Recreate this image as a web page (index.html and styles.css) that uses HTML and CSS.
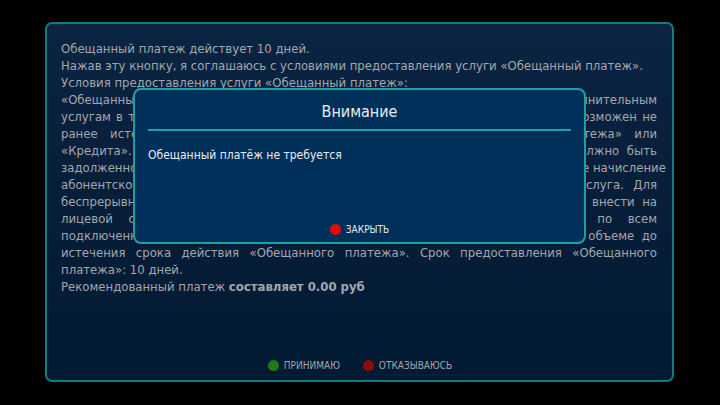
FILE: index.html
```html
<!DOCTYPE html>
<html lang="ru">
<head>
<meta charset="utf-8">
<title>Обещанный платеж</title>
<link rel="stylesheet" href="styles.css">
</head>
<body>
<div class="screen">
  <div class="panel">
    <div class="terms">
      <div class="line">Обещанный платеж действует 10 дней.</div>
      <div class="line">Нажав эту кнопку, я соглашаюсь с условиями предоставления услуги «Обещанный платеж».</div>
      <div class="line">Условия предоставления услуги «Обещанный платеж»:</div>
      <div class="line just">«Обещанный платеж» предоставляется для оплаты услуг по основным и дополнительным</div>
      <div class="line just">услугам в течение всего срока его действия. Повторный «Обещанный платеж» возможен не</div>
      <div class="line just">ранее истечения срока действия ранее подключенного «Обещанного платежа» или</div>
      <div class="line just">«Кредита». На момент подключения услуги на лицевом счете абонента не должно быть</div>
      <div class="line just">задолженности по оплате услуг более чем за один расчетный период. Ежемесячное начисление</div>
      <div class="line just">абонентской платы производится в полном объеме, пока предоставляется услуга. Для</div>
      <div class="line just">беспрерывного пользования услугами после окончания «Обещанного платежа» внести на</div>
      <div class="line just">лицевой счет денежные средства в сумме, достаточной для оплаты по всем</div>
      <div class="line just">подключенным пакетам и услугам, а также погасить «Обещанный платеж» в объеме до</div>
      <div class="line just">истечения срока действия «Обещанного платежа». Срок предоставления «Обещанного</div>
      <div class="line">платежа»: 10 дней.</div>
      <div class="line">Рекомендованный платеж <b>составляет 0.00 руб</b></div>
    </div>
    <div class="actions">
      <div class="action"><span class="dot green"></span>ПРИНИМАЮ</div>
      <div class="action"><span class="dot dark-red"></span>ОТКАЗЫВАЮСЬ</div>
    </div>
  </div>
  <div class="modal">
    <div class="modal-title">Внимание</div>
    <div class="modal-body">Обещанный платёж не требуется</div>
    <div class="modal-actions">
      <div class="action light"><span class="dot red"></span>ЗАКРЫТЬ</div>
    </div>
  </div>
</div>
</body>
</html>
```

FILE: styles.css
```css
html, body {
  margin: 0;
  padding: 0;
  background: #000;
}
body {
  width: 720px;
  height: 405px;
  overflow: hidden;
  font-family: "DejaVu Sans Condensed", "DejaVu Sans", sans-serif;
  font-stretch: condensed;
}
.screen {
  position: relative;
  width: 720px;
  height: 405px;
  padding: 22px 0 0 45px;
  box-sizing: border-box;
}
.panel {
  width: 629px;
  height: 360px;
  box-sizing: border-box;
  border: 2px solid #137c7c;
  border-radius: 7px;
  background: linear-gradient(to bottom, #0b2442 0%, #061d38 60%, #031a33 100%);
  padding: 16px 15px 0 14px;
  display: flex;
  flex-direction: column;
}
.terms {
  color: #a3a7ac;
  font-size: 13px;
  line-height: 17px;
}
.line {
  white-space: nowrap;
}
.line.just {
  text-align: justify;
  text-align-last: justify;
}
.terms b {
  font-weight: bold;
}
.actions {
  margin-top: auto;
  margin-bottom: 8px;
  display: flex;
  justify-content: center;
  gap: 23px;
  padding-left: 2px;
}
.action {
  display: flex;
  align-items: center;
  gap: 5px;
  color: #a3a7ac;
  font-size: 10px;
  line-height: 13px;
}
.action.light {
  color: #e4e8ee;
}
.dot {
  width: 11px;
  height: 11px;
  border-radius: 50%;
  display: inline-block;
}
.dot.green { background: #237a12; }
.dot.dark-red { background: #8e0b0b; }
.dot.red { background: #e30a0a; }
.modal {
  position: absolute;
  left: 133px;
  top: 88px;
  width: 453px;
  height: 156px;
  box-sizing: border-box;
  border: 2px solid #1ca0a0;
  border-radius: 8px;
  background: #00305a;
  padding: 0 13px;
  display: flex;
  flex-direction: column;
}
.modal-title {
  color: #e6ecf2;
  font-size: 16px;
  line-height: 20px;
  text-align: center;
  padding: 12px 0 7px;
  border-bottom: 2px solid #1aa3a8;
}
.modal-body {
  color: #e6ecf2;
  font-size: 12px;
  line-height: 16px;
  padding-top: 16px;
}
.modal-actions {
  margin-top: auto;
  margin-bottom: 6px;
  display: flex;
  justify-content: center;
}
```
